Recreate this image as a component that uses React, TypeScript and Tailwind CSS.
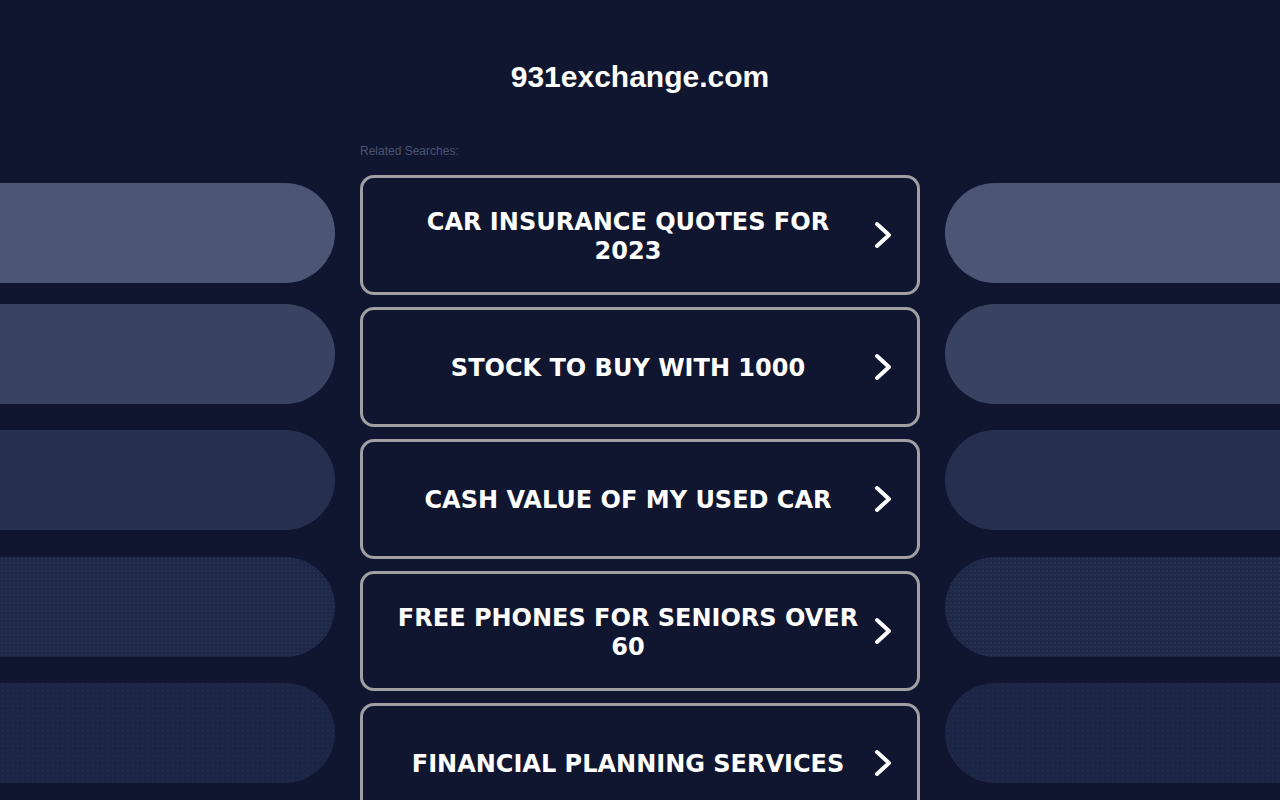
const searches = [
  "CAR INSURANCE QUOTES FOR 2023",
  "STOCK TO BUY WITH 1000",
  "CASH VALUE OF MY USED CAR",
  "FREE PHONES FOR SENIORS OVER 60",
  "FINANCIAL PLANNING SERVICES",
];

// decorative side pills, top margin before each one
const pills = [
  { mt: "mt-0", bg: "bg-[#4c5674]" },
  { mt: "mt-[21px]", bg: "bg-[#3a4261]" },
  { mt: "mt-[26px]", bg: "bg-[#272f4e]" },
  { mt: "mt-[27px]", bg: "bg-[#1f2847] bg-[radial-gradient(#242f51_1px,transparent_1px)] bg-[length:4px_4px]" },
  { mt: "mt-[26px]", bg: "bg-[#1c2545] bg-[radial-gradient(#212b4c_1px,transparent_1px)] bg-[length:5px_5px]" },
];

function SidePills({ side }: { side: "left" | "right" }) {
  return (
    <aside className="pt-[183px] flex flex-col">
      {pills.map((p, i) => (
        <div
          key={i}
          className={`h-[100px] ${p.mt} ${p.bg} ${side === "left" ? "rounded-r-full" : "rounded-l-full"}`}
        />
      ))}
    </aside>
  );
}

function Chevron() {
  return (
    <svg width="24" height="30" viewBox="0 0 24 30" fill="none" className="shrink-0">
      <path d="M4 4 L16 15 L4 26" stroke="white" strokeWidth="4" strokeLinecap="round" strokeLinejoin="round" />
    </svg>
  );
}

export default function App() {
  return (
    <div className="min-h-screen bg-[#101630] overflow-hidden">
      <div className="grid grid-cols-[335px_560px_335px] gap-x-[25px]">
        <SidePills side="left" />

        <main>
          <h1 className="pt-[59px] text-center text-[30px] leading-[36px] font-bold text-white font-['Liberation_Sans',Arial,sans-serif]">
            931exchange.com
          </h1>
          <p className="mt-[48px] text-[12px] leading-[16px] text-[#4a5372] font-['Liberation_Sans',Arial,sans-serif]">
            Related Searches:
          </p>

          <div className="mt-4 flex flex-col gap-3">
            {searches.map((s) => (
              <a
                key={s}
                href="#"
                className="h-[120px] flex items-center gap-[11px] pl-[31px] pr-5 border-[3px] border-[#a0a0a2] rounded-[14px] bg-[#101630]"
              >
                <span className="flex-1 pt-[3px] text-center text-white text-[24px] leading-[29px] font-bold font-['DejaVu_Sans',Verdana,sans-serif]">
                  {s}
                </span>
                <Chevron />
              </a>
            ))}
          </div>
        </main>

        <SidePills side="right" />
      </div>
    </div>
  );
}
